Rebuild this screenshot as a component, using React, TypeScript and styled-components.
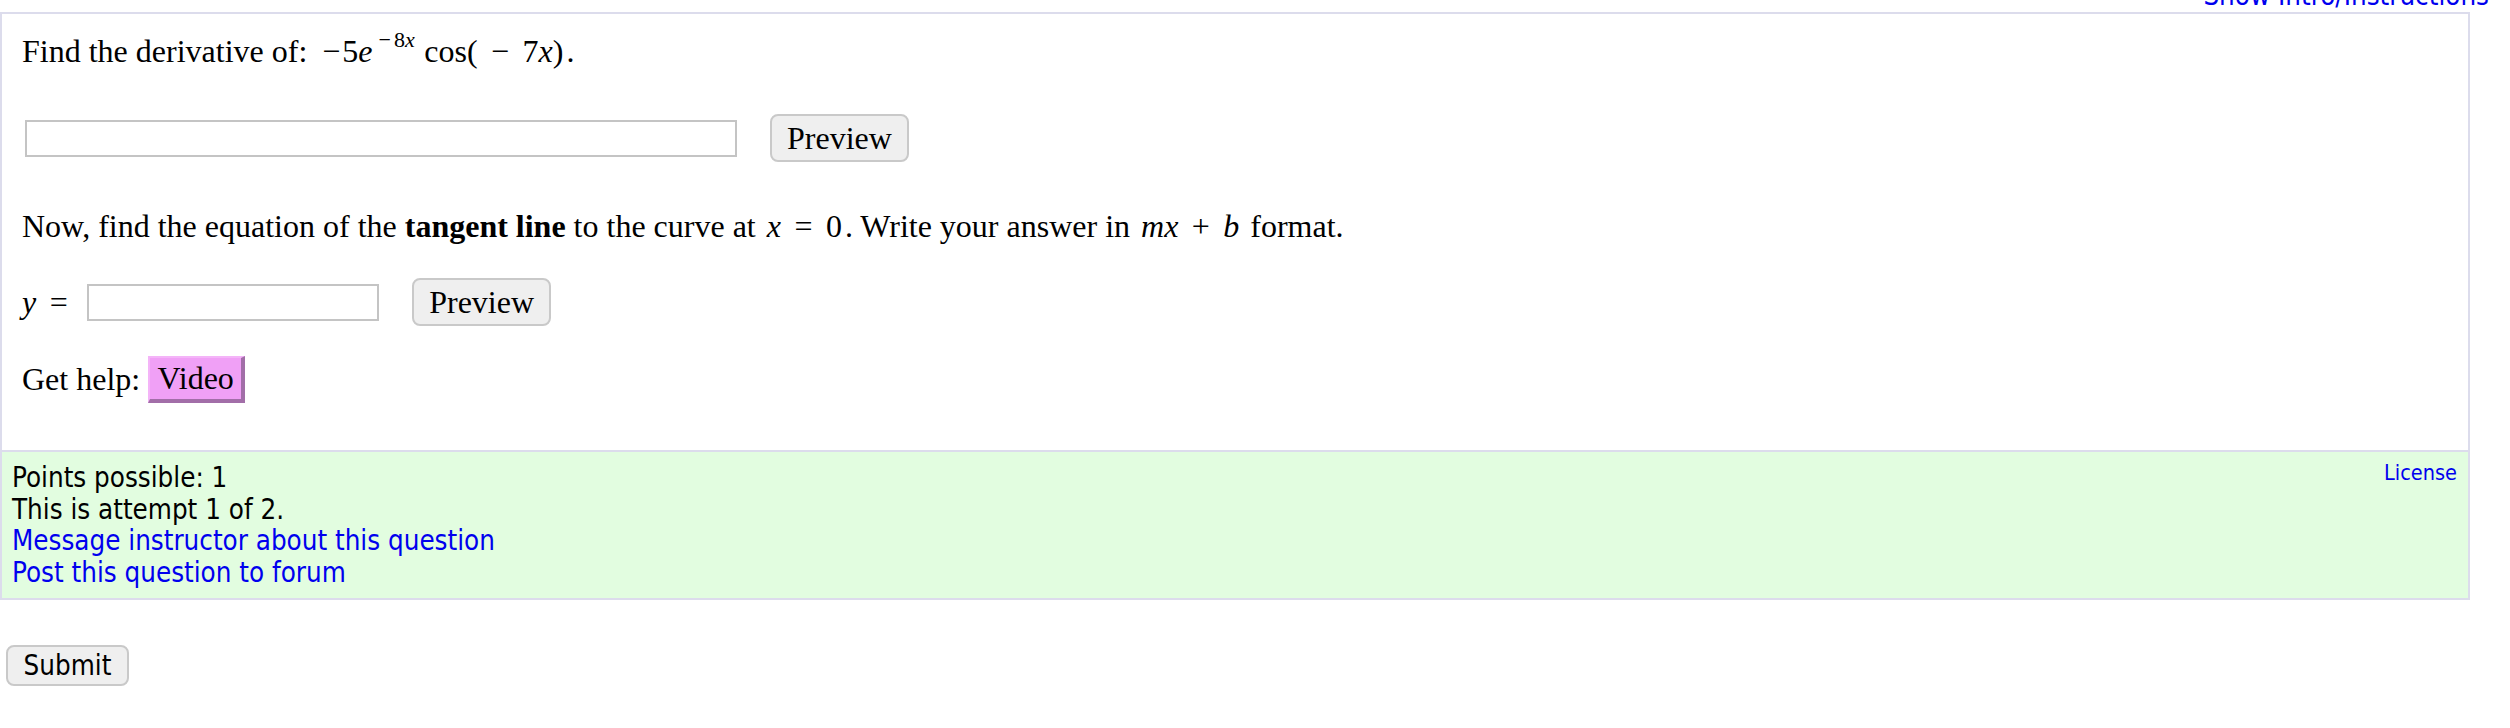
import styled, { createGlobalStyle } from "styled-components"

const GlobalStyle = createGlobalStyle`
    body {
        margin: 0;
        background: #fff;
        color: #000;
        font-family: "Liberation Serif", "Times New Roman", serif;
    }
`

const sans = `"DejaVu Sans Condensed", "DejaVu Sans", Verdana, sans-serif`

const TopBar = styled.div`
    margin: -21px 21px 0 0;
    height: 32px;
    line-height: 32px;
    text-align: right;
    font-family: ${sans};
    font-stretch: condensed;
    font-size: 27.5px;
`

const BlueLink = styled.a`
    color: #0000ee;
    text-decoration: none;
    cursor: pointer;
`

const QuestionBox = styled.div`
    margin: 1px 40px 0 0;
    border: 2px solid #dcdcec;
`

const QuestionBody = styled.div`
    padding: 19px 20px 47px 20px;
    font-size: 32px;
    line-height: 37px;
`

const TextLine = styled.div<{ gap: number }>`
    margin-top: ${props => props.gap}px;
    white-space: nowrap;
`

const AnswerRow = styled.div<{ gap: number }>`
    display: flex;
    align-items: center;
    height: 48px;
    margin-top: ${props => props.gap}px;
`

const AnswerInput = styled.input<{ w: number }>`
    box-sizing: border-box;
    width: ${props => props.w}px;
    height: 37px;
    margin: 0 0 0 3px;
    border: 2px solid #c4c4c4;
    background: #fff;
    outline: none;
`

const PreviewButton = styled.button`
    box-sizing: border-box;
    width: 139px;
    height: 48px;
    margin-left: 33px;
    padding: 0;
    font-family: "Liberation Serif", serif;
    font-size: 32px;
    color: #000;
    background: #efefef;
    border: 2px solid #c9c9c9;
    border-radius: 8px;
`

const HelpRow = styled.div<{ gap: number }>`
    display: flex;
    align-items: center;
    height: 47px;
    margin-top: ${props => props.gap}px;
`

const VideoButton = styled.button`
    box-sizing: border-box;
    width: 97px;
    height: 47px;
    margin-left: 8px;
    padding: 0;
    font-family: "Liberation Serif", serif;
    font-size: 32px;
    color: #000;
    background: #f0a0f6;
    border-style: solid;
    border-width: 2px 4px 4px 2px;
    border-color: #f4b4f8 #a26ea8 #a26ea8 #f4b4f8;
`

const Math = styled.span`
    font-family: "Liberation Serif", serif;
    white-space: nowrap;
    padding: 0 3px;
`

const MathVar = styled.i`
    font-style: italic;
`

const Sup = styled.sup`
    font-size: 22px;
    vertical-align: 15px;
    line-height: 0;
    margin-left: 3px;
`

const Fn = styled.span`
    margin-left: 0.3em;
`

const LeadOp = styled.span`
    margin: 0 2px 0 4px;
`

const BinOp = styled.span<{ tight?: boolean }>`
    margin: 0 ${props => props.tight ? "3px" : "0.42em"};
`

const Rel = styled.span`
    margin: 0 0.42em;
`

const Label = styled.span`
    margin-right: 3px;
`

const Footer = styled.div`
    display: flex;
    justify-content: space-between;
    align-items: flex-start;
    padding: 10px 11px 9px 10px;
    background: #e2fde0;
    border-top: 2px solid #dcdcec;
    font-family: ${sans};
    font-stretch: condensed;
    font-size: 27.5px;
    line-height: 31.7px;
`

const FooterLines = styled.div`
    display: flex;
    flex-direction: column;
`

const License = styled(BlueLink)`
    font-size: 21.5px;
    line-height: 26px;
    margin-top: -2px;
`

const SubmitButton = styled.button`
    box-sizing: border-box;
    width: 123px;
    height: 41px;
    margin: 45px 0 0 6px;
    padding: 0;
    font-family: ${sans};
    font-stretch: condensed;
    font-size: 27.5px;
    color: #000;
    background: #efefef;
    border: 2px solid #c9c9c9;
    border-radius: 8px;
`

function App() {
    return (
        <>
            <GlobalStyle />
            <TopBar>
                <BlueLink>Show Intro/Instructions</BlueLink>
            </TopBar>
            <QuestionBox>
                <QuestionBody>
                    <TextLine gap={0}>
                        Find the derivative of:{" "}
                        <Math>
                            <LeadOp>−</LeadOp>5<MathVar>e</MathVar>
                            <Sup><BinOp tight>−</BinOp>8<MathVar>x</MathVar></Sup>
                            <Fn>cos</Fn>(<BinOp>−</BinOp>7<MathVar>x</MathVar>)
                        </Math>.
                    </TextLine>
                    <AnswerRow gap={44}>
                        <AnswerInput w={712} />
                        <PreviewButton>Preview</PreviewButton>
                    </AnswerRow>
                    <TextLine gap={46}>
                        Now, find the equation of the <b>tangent line</b> to the curve at{" "}
                        <Math>
                            <MathVar>x</MathVar><Rel>=</Rel>0
                        </Math>
                        . Write your answer in{" "}
                        <Math>
                            <MathVar>mx</MathVar><BinOp>+</BinOp><MathVar>b</MathVar>
                        </Math>{" "}
                        format.
                    </TextLine>
                    <AnswerRow gap={33}>
                        <Label>
                            <MathVar>y</MathVar><Rel>=</Rel>
                        </Label>
                        <AnswerInput w={292} />
                        <PreviewButton>Preview</PreviewButton>
                    </AnswerRow>
                    <HelpRow gap={30}>
                        Get help:
                        <VideoButton>Video</VideoButton>
                    </HelpRow>
                </QuestionBody>
                <Footer>
                    <FooterLines>
                        <span>Points possible: 1</span>
                        <span>This is attempt 1 of 2.</span>
                        <BlueLink>Message instructor about this question</BlueLink>
                        <BlueLink>Post this question to forum</BlueLink>
                    </FooterLines>
                    <License>License</License>
                </Footer>
            </QuestionBox>
            <SubmitButton>Submit</SubmitButton>
        </>
    )
}

export default App
